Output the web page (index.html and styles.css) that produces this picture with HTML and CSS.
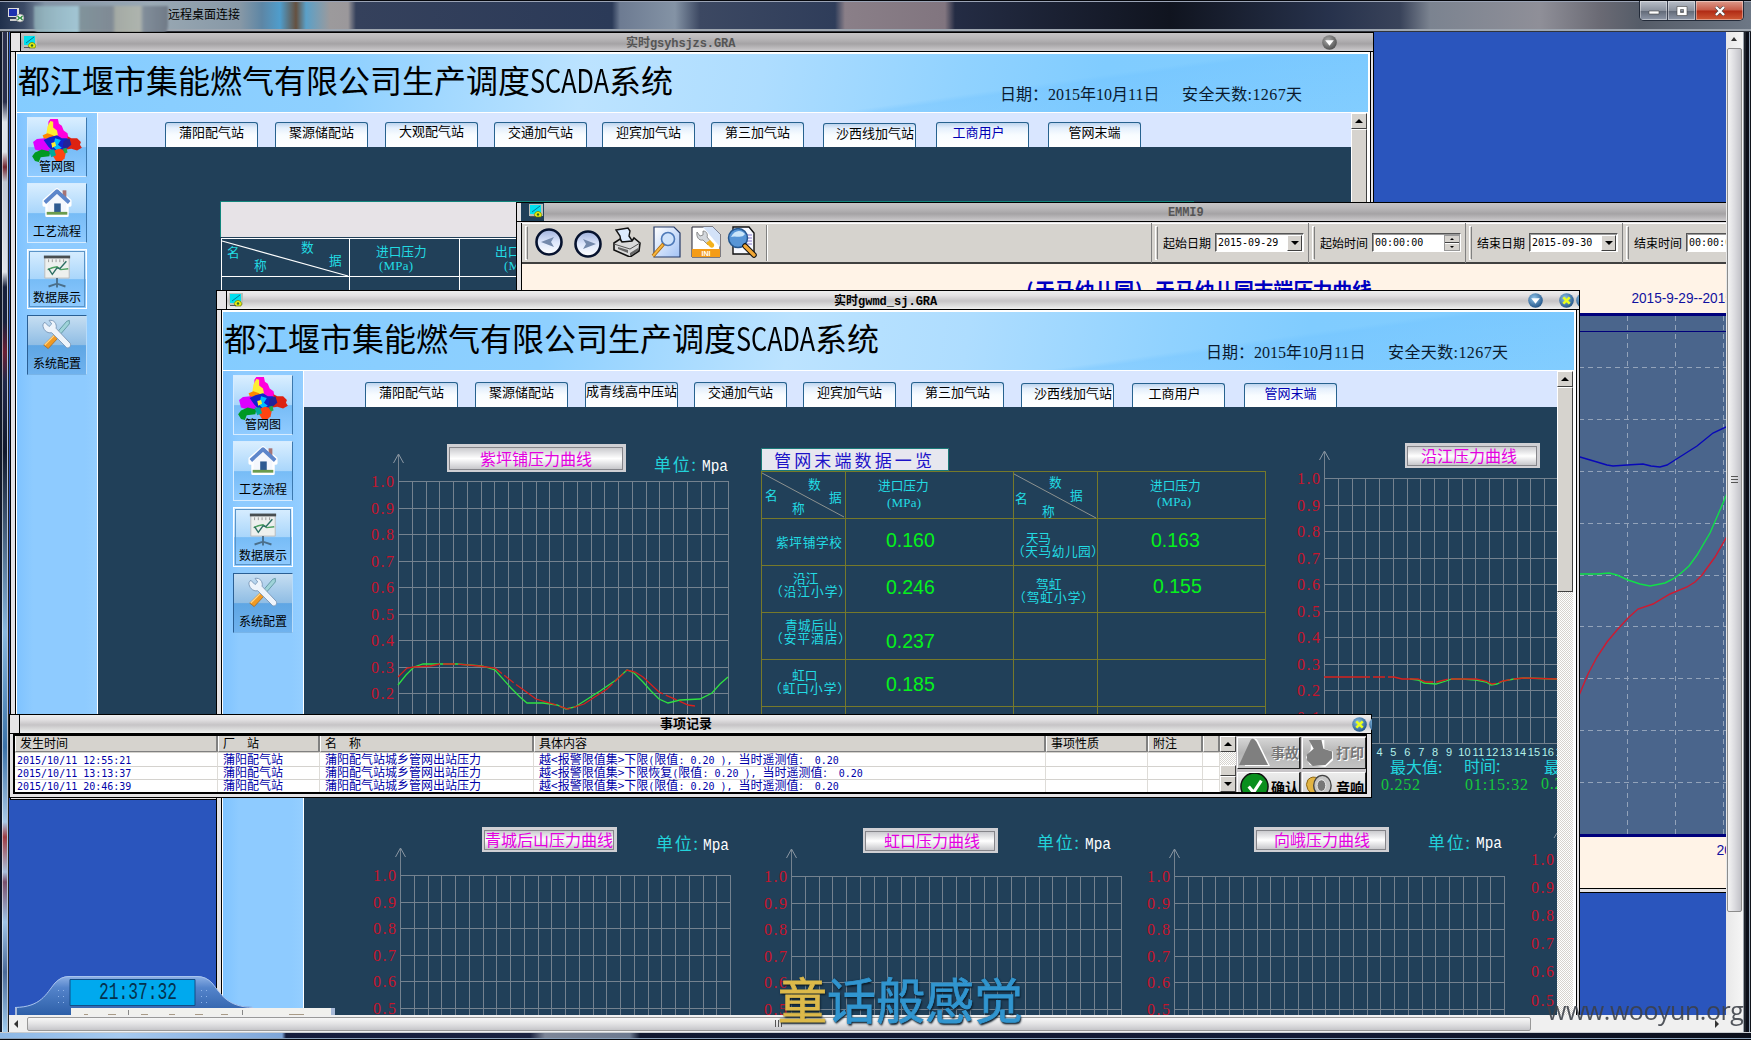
FILE: index.html
```html
<!DOCTYPE html>
<html lang="zh-CN">
<head>
<meta charset="utf-8">
<title>远程桌面连接</title>
<link rel="stylesheet" href="styles.css">
</head>
<body>
<svg class="defs" width="0" height="0" aria-hidden="true">
  <defs>
    <linearGradient id="gBall" x1="0" y1="0" x2="0" y2="1"><stop offset="0" stop-color="#9fb0dc"/><stop offset=".5" stop-color="#dde6fb"/><stop offset="1" stop-color="#fff"/></linearGradient>
    <linearGradient id="gPage" x1="0" y1="0" x2="1" y2="1"><stop offset="0" stop-color="#fff"/><stop offset="1" stop-color="#a3c3f5"/></linearGradient>
    <linearGradient id="gBtn" x1="0" y1="0" x2="0" y2="1"><stop offset="0" stop-color="#c8c8cc"/><stop offset=".5" stop-color="#fff"/><stop offset="1" stop-color="#c4c4c8"/></linearGradient>
    <linearGradient id="gClock" x1="0" y1="0" x2="0" y2="1"><stop offset="0" stop-color="#8fb2e6"/><stop offset=".3" stop-color="#5484cb"/><stop offset="1" stop-color="#2d5fa8"/></linearGradient>
    <radialGradient id="gBlue" cx=".4" cy=".35" r=".7"><stop offset="0" stop-color="#8fc4ea"/><stop offset="1" stop-color="#1d4f83"/></radialGradient>
    <radialGradient id="gGrey" cx=".4" cy=".35" r=".7"><stop offset="0" stop-color="#aaa"/><stop offset="1" stop-color="#4c4c4c"/></radialGradient>
  </defs>
  <symbol id="i-win" viewBox="0 0 14 14"><path d="M0 0h14v12H0z" fill="#b9bfb9"/><path d="M1 1h11v9H1z" fill="#00e0ee"/><path d="M3 8l8-6" stroke="#079" /><path d="M6 13a3.6 3.6 0 1 1 6 0z" fill="#e6ee10" stroke="#5b6a00" stroke-width=".6"/><circle cx="9" cy="10.5" r="1.2" fill="#286a30"/><path d="M1 12.500h6" stroke="#555"/></symbol>
  <symbol id="i-map" viewBox="0 0 52 46">
    <path d="M17 3l2-3 8 0 1 5 3 2 2 5 4 3 1 5-5 2-9-2-5-6-2-4z" fill="#f0d"/><path d="M16 8l3-6 3 1 0 6 4 3 1 5-4 3-9 1 1-6z" fill="#fe3"/>
    <path d="M11 17l5-2 6 2 4 6-8 4-5-4z" fill="#f80"/><path d="M1 24l4-3 8-1 9 3 3 7-5 7-5-1-5-2-7-2z" fill="#d0f"/><path d="M12 22l6-3 8-2 5 3 8 0 3 7-6 3-4 5-6 1-5-3-4-4z" fill="#12c"/>
    <path d="M24 20l6 2-3 5 4 3-5 3-4-4z" fill="#0bf"/><path d="M20 25l4-1 1 4-4 2z" fill="#fe3"/><path d="M37 18l4 2 6 0 4 4-1 3 2 3-5 3-6-2-5 1-3-5 4-3z" fill="#d21"/><path d="M33 23l6-3 2 7-6 5-3-3z" fill="#229"/>
    <path d="M0 39l3-4 7-3 9 2-1 5-9 1-2 5-4-1z" fill="#092"/><path d="M23 33l5-2 4 1 3 4-1 5-4 4-5-1-3-5z" fill="#f41"/><path d="M17 32l6 0 2 6-5 2z" fill="#0a9"/><path d="M32 31l4-1 1 5-3 1z" fill="#2a4"/>
  </symbol>
  <symbol id="i-home" viewBox="0 0 32 32"><path d="M2 14L16 2l14 12v5h-3v11H5V19H2z" fill="#fff" stroke="#fff" stroke-width="3" stroke-linejoin="round"/><path d="M22 3h4v8h-4z" fill="#a77474"/><path d="M6 16l10-9 10 9v11H6z" fill="#f4f7fd"/><path d="M3 16L16 4l13 12" fill="none" stroke="#5d86cb" stroke-width="4" stroke-linejoin="round"/><path d="M13 17h7v10h-7z" fill="#2e5a91"/><path d="M5 26h22v3H5z" fill="#6a9b4e"/></symbol>
  <symbol id="i-board" viewBox="0 0 32 36"><path d="M3 3h26v22H3z" fill="#edf0ee" stroke="#bbb"/><path d="M2 1h28v3H2z" fill="#484e50"/><path d="M7 5v3M11 5v3M15 5v3M19 5v3M23 5v3" stroke="#999"/><path d="M6 16l5-2 5-1 4 3 8-1" fill="none" stroke="#4aa05e" stroke-width="1.500"/><path d="M7 15l4 6 5-7 3 1 7-8" fill="none" stroke="#2d6e63" stroke-width="1.500"/><path d="M16 25v6M7 34l9-3 9 3M16 30v5" fill="none" stroke="#4b6f8a" stroke-width="2"/></symbol>
  <symbol id="i-tools" viewBox="0 0 34 34"><path d="M31 1l-3 1-12 14 3 3L31 5z" fill="#9fd3d8" stroke="#4b8791" stroke-width=".8"/><path d="M16 15l4 4L7 33l-5-4z" fill="#f09a24" stroke="#a85f10" stroke-width=".8"/><path d="M3 29l13-13" stroke="#ffd68a" stroke-width="1.500"/><path d="M3 3l5 5 3-3-3-4c6-1 9 4 8 9l16 17c2 4-3 7-5 4L11 15C5 16 1 11 1 6z" fill="#eef4fb" stroke="#7794b4"/></symbol>
  <symbol id="i-prev" viewBox="0 0 28 28"><circle cx="14" cy="14" r="12.500" fill="url(#gBall)" stroke="#06122e" stroke-width="2.600"/><path d="M6 14l13-5-3 5 3 5z" fill="#7489ac"/></symbol>
  <symbol id="i-next" viewBox="0 0 28 28"><circle cx="14" cy="14" r="12.500" fill="url(#gBall)" stroke="#06122e" stroke-width="2.600"/><path d="M22 14L9 9l3 5-3 5z" fill="#7489ac"/></symbol>
  <symbol id="i-print" viewBox="0 0 28 30"><path d="M3 3l12-2 2 3-1 5 4 6H8L7 9z" fill="#dceafd" stroke="#111" stroke-width="1.400"/><path d="M1 16l6-4 2 3 10-1 2-3 6 5-1 8-9 6-16-7z" fill="#dadada" stroke="#111" stroke-width="1.600"/><path d="M1 17l16 5 10-6" fill="none" stroke="#555"/><path d="M5 22l10 4v-3L5 20zM17 26l8-5v3l-8 5z" fill="#666"/></symbol>
  <symbol id="i-find" viewBox="0 0 30 32"><path d="M3 1h20l6 6v24H3z" fill="url(#gPage)" stroke="#243a68" stroke-width="1.200"/><circle cx="17" cy="13" r="6.500" fill="#cfe3fb" stroke="#4d79b8" stroke-width="1.600"/><path d="M12.500 18L2 30" stroke="#a8660f" stroke-width="3.600"/><path d="M12 18.500L2 30" stroke="#f7b63d" stroke-width="2"/></symbol>
  <symbol id="i-ini" viewBox="0 0 30 32"><path d="M1 1h21l7 7v23H1z" fill="#fff" stroke="#223" /><path d="M22 1l7 7v13L12 1z" fill="#d3e2f8"/><path d="M6 6l3 4 3-1 0-4c4 0 5 4 4 6l4 5-3 3-5-5c-4 1-7-3-6-8z" fill="#d3d7dc" stroke="#777" stroke-width=".8"/><path d="M15 17l4-3 4 4c1 3-2 5-4 3z" fill="#f4b21c"/><path d="M1 23h28v8H1z" fill="#f49c17"/><text x="15" y="27" class="ini">INI</text></symbol>
  <symbol id="i-scan" viewBox="0 0 30 32"><path d="M6 1h16l5 6v21H6z" fill="#f7f9ff" stroke="#111" stroke-width="1.400"/><path d="M19 9h6M19 12h6M19 15h6M19 18h6" stroke="#8877cc"/><circle cx="11" cy="12" r="9.500" fill="#5795d6" stroke="#24568e" stroke-width="1.500"/><path d="M4 11c3-7 10-8 14-3-3 5-10 1-14 3z" fill="#cbe6fa"/><path d="M18 20l9 9" stroke="#111" stroke-width="5.500" stroke-linecap="round"/><path d="M18 20l9 9" stroke="#f2a735" stroke-width="3.400" stroke-linecap="round"/></symbol>
  <symbol id="i-down" viewBox="0 0 14 14"><circle cx="7" cy="7" r="6.800" fill="url(#gBlue)"/><path d="M3 5h8l-4 5z" fill="#fff"/></symbol>
  <symbol id="i-downg" viewBox="0 0 14 14"><circle cx="7" cy="7" r="6.800" fill="url(#gGrey)"/><path d="M3 5h8l-4 5z" fill="#fff"/></symbol>
  <symbol id="i-close" viewBox="0 0 14 14"><circle cx="7" cy="7" r="6.800" fill="url(#gBlue)"/><path d="M4 4l6 6M10 4l-6 6" stroke="#e9ff1c" stroke-width="2.400"/></symbol>
</svg>

<div class="rdp">
  <header class="rdp-title">
    <svg class="rdp-icon" viewBox="0 0 18 16"><path d="M0 1h11v9H0z" fill="#ddd"/><path d="M1 2h8v7H1z" fill="#1b2fb0"/><path d="M2 12h8v2H2z" fill="#ccc"/><circle cx="12" cy="11" r="4" fill="#eee" stroke="#777" stroke-width=".6"/><path d="M9.500 9l2 2-2 2M14.500 9l-2 2 2 2" fill="none" stroke="#1a8a2d" stroke-width="1.200"/></svg>
    <span class="mosaic"></span>
    <span class="rdp-name">远程桌面连接</span>
    <div class="caption">
      <span class="cap"><svg viewBox="0 0 12 10"><path d="M1 5h10v3H1z" fill="#fff" stroke="#444" stroke-width=".6"/></svg></span>
      <span class="cap"><svg viewBox="0 0 12 10"><path d="M1 .5h10v9H1z M4.500 3.500h3v3h-3z" fill="#fff" fill-rule="evenodd" stroke="#444" stroke-width=".6"/></svg></span>
      <span class="cap cap-close"><svg viewBox="0 0 12 10"><path d="M2 1l8 8M10 1L2 9" stroke="#444" stroke-width="3.400"/><path d="M2 1l8 8M10 1L2 9" stroke="#fff" stroke-width="2.400"/></svg></span>
    </div>
  </header>
  <div class="edge edge-left"></div>

  <main class="desktop">
    <section class="win win-users">
      <div class="bar inactive"><i class="cell"></i><svg class="wi"><use href="#i-win"/></svg><b class="wt">实时<tt>gsyhsjzs.GRA</tt></b><svg class="wb wb-a"><use href="#i-downg"/></svg></div>
      <div class="inner">
        <div class="banner"><h1>都江堰市集能燃气有限公司生产调度<span>SCADA</span>系统</h1><p>日期：2015年10月11日</p><p class="days">安全天数:1267天</p></div>
        <div class="app">
          <nav class="side">
            <a class="sb sb-map"><svg><use href="#i-map"/></svg>管网图</a>
            <a class="sb"><svg><use href="#i-home"/></svg>工艺流程</a>
            <a class="sb sb-on"><svg><use href="#i-board"/></svg>数据展示</a>
            <a class="sb sb-dim"><svg><use href="#i-tools"/></svg>系统配置</a>
          </nav>
          <div class="page">
            <div class="tabs tabs-a">
              <a>蒲阳配气站</a><a>聚源储配站</a><a class="up">大观配气站</a><a>交通加气站</a><a>迎宾加气站</a><a>第三加气站</a><a class="low far">沙西线加气站</a><a class="cur near">工商用户</a><a>管网末端</a>
            </div>
            <svg class="canvas" width="1253" height="640" viewBox="98 147 1253 640">
              <path d="M221 201h973v36H221z" fill="#e7e3e7"/>
              <path d="M220.500 237V201.500H1194" class="teal"/>
              <path d="M221 238.500H1194M221 276.500H1194M221.500 238V640M349.500 238V640M459.500 238V640" class="wline"/>
              <path d="M222 241L348 276" class="wdiag"/>
              <g class="c13"><text x="227" y="251" textLength="12">名</text><text x="254" y="264" textLength="12">称</text><text x="301" y="246">数</text><text x="329" y="259">据</text><text x="376" y="250">进口压力</text><text x="379" y="265" class="lat" textLength="34">(MPa)</text><text x="495" y="250">出口压力</text><text x="504" y="265" class="lat" textLength="34">(MPa)</text></g>
            </svg>
          </div>
          <div class="vs"><i class="vs-up"></i><i class="vs-thumb"></i></div>
        </div>
      </div>
    </section>

    <section class="win win-curve">
      <div class="bar inactive"><i class="cell"></i><span class="dark"><svg class="wi"><use href="#i-win"/></svg></span><b class="wt"><tt>EMMI9</tt></b></div>
      <div class="inner">
        <div class="tools">
          <i class="grip"></i>
          <svg class="t1"><use href="#i-prev"/></svg><svg class="t2"><use href="#i-next"/></svg><svg class="t3"><use href="#i-print"/></svg><svg class="t4"><use href="#i-find"/></svg><svg class="t5"><use href="#i-ini"/></svg><svg class="t6"><use href="#i-scan"/></svg>
          <i class="sep"></i>
          <label class="fld"><i class="grip"></i>起始日期<span class="inp"><tt>2015-09-29</tt><i class="dd"></i></span></label>
          <label class="fld"><i class="grip"></i>起始时间<span class="inp"><tt>00:00:00</tt><i class="sp"></i></span></label>
          <label class="fld"><i class="grip"></i>结束日期<span class="inp"><tt>2015-09-30</tt><i class="dd"></i></span></label>
          <label class="fld"><i class="grip"></i>结束时间<span class="inp"><tt>00:00:00</tt><i class="sp"></i></span></label>
        </div>
        <svg class="plot" width="1208" height="625" viewBox="522 264 1208 625">
          <path d="M522 264h1208v625H522z" fill="#fff3e7"/>
          <g class="ptitle"><text x="1026" y="289">(</text><text x="1035" y="289" textLength="99">天马幼儿园</text><text x="1135" y="289">)</text><text x="1155" y="289" textLength="217">天马幼儿园末端压力曲线</text></g>
          <text x="1631.500" y="298" class="pdate" textLength="133" lengthAdjust="spacingAndGlyphs">2015-9-29--2015-9-30</text>
          <path d="M560 313h1170v524H560z" fill="#4a658c"/>
          <path d="M560 313h1170v3H560zM560 331h1170v1H560zM560 834h1170v3H560z" fill="#00007b"/>
          <path class="dash" d="M1627.500 316V834M1675.500 316V834M1723.500 316V834M1579 367.500H1730M1579 419.500H1730M1579 471.500H1730M1579 523.500H1730M1579 575.500H1730M1579 626.500H1730M1579 678.500H1730M1579 730.500H1730M1579 782.500H1730"/>
          <polyline class="ln" stroke="#0808b8" points="1570,454 1580,457 1597,462 1607,465 1613,466 1627,465 1643,464 1651,466 1660,467 1667,465 1675,460 1697,446 1713,433 1726,427 1732,425"/>
          <polyline class="ln" stroke="#10e048" points="1570,574 1598,574 1609,573 1617,575 1628,580 1640,584 1650,586 1665,583 1673,579 1680,574 1689,566 1697,555 1710,533 1720,510 1726,496 1730,486"/>
          <polyline class="ln" stroke="#d01a30" points="1575,706 1580,693 1588,674 1597,657 1607,642 1617,630 1628,618 1638,609 1653,604 1670,594 1687,587 1695,582 1702,575 1715,557 1726,538 1730,531"/>
          <text x="1716.500" y="850" class="pdate">2015</text>
        </svg>
      </div>
    </section>

    <section class="win win-net">
      <div class="bar"><i class="cell"></i><svg class="wi"><use href="#i-win"/></svg><b class="wt">实时<tt>gwmd_sj.GRA</tt></b><svg class="wb wb-a"><use href="#i-down"/></svg><svg class="wb wb-b"><use href="#i-close"/></svg><svg class="wb wb-c"><use href="#i-close"/></svg></div>
      <div class="inner">
        <div class="banner"><h1>都江堰市集能燃气有限公司生产调度<span>SCADA</span>系统</h1><p>日期：2015年10月11日</p><p class="days">安全天数:1267天</p></div>
        <div class="app">
          <nav class="side">
            <a class="sb sb-map"><svg><use href="#i-map"/></svg>管网图</a>
            <a class="sb"><svg><use href="#i-home"/></svg>工艺流程</a>
            <a class="sb sb-on"><svg><use href="#i-board"/></svg>数据展示</a>
            <a class="sb sb-dim"><svg><use href="#i-tools"/></svg>系统配置</a>
          </nav>
          <div class="page">
            <div class="tabs tabs-b">
              <a>蒲阳配气站</a><a>聚源储配站</a><a class="up">成青线高中压站</a><a>交通加气站</a><a>迎宾加气站</a><a>第三加气站</a><a class="low far">沙西线加气站</a><a class="low near">工商用户</a><a class="low cur">管网末端</a>
            </div>
            <svg class="canvas" width="1253" height="608" viewBox="304 407 1253 608">
              <g id="charts"></g>
              <g class="olive"><path d="M761.500 471V720M845.500 471V720M1013.500 471V720M1097.500 471V720M1265.500 471V720M761 471.500H1266M761 518.500H1266M761 565.500H1266M761 612.500H1266M761 659.500H1266M761 706.500H1266"/></g>
              <path d="M762 473L844 517M1014 474L1096 518" class="gdiag"/>
              <path d="M761.500 448.500h187v22h-187z" fill="#e7e7ef" stroke="#1a7a78"/>
              <text x="774" y="459" class="kai" textLength="158">管网末端数据一览</text>
              <g class="c13">
                <text x="808" y="483">数</text><text x="829" y="496">据</text><text x="765" y="494">名</text><text x="792" y="507">称</text>
                <text x="878" y="484">进口压力</text><text x="887" y="502" class="lat" textLength="34">(MPa)</text>
                <text x="1049" y="481">数</text><text x="1070" y="494">据</text><text x="1015" y="497">名</text><text x="1042" y="510">称</text>
                <text x="1150" y="484">进口压力</text><text x="1157" y="501" class="lat" textLength="34">(MPa)</text>
                <text x="776" y="541" textLength="66">紫坪铺学校</text><text x="1026" y="537" textLength="25">天马</text><text x="1012" y="550" textLength="92">（天马幼儿园）</text>
                <text x="793" y="577">沿江</text><text x="770" y="590" textLength="81">（沿江小学）</text><text x="1036" y="583">驾虹</text><text x="1013" y="596" textLength="81">（驾虹小学）</text>
                <text x="785" y="624" textLength="52">青城后山</text><text x="770" y="637" textLength="81">（安平酒店）</text><text x="792" y="674">虹口</text><text x="769" y="687" textLength="81">（虹口小学）</text>
              </g>
              <g class="val"><text x="886" y="540">0.160</text><text x="886" y="587">0.246</text><text x="886" y="641">0.237</text><text x="886" y="684">0.185</text><text x="1151" y="540">0.163</text><text x="1153" y="586">0.155</text></g>
              <g class="hours" id="hours"></g>
              <g class="c16"><text x="1390" y="766">最大值:</text><text x="1464" y="765">时间:</text><text x="1544" y="766">最小值:</text></g>
              <g class="g16"><text x="1381" y="784" textLength="39">0.252</text><text x="1465" y="784" textLength="63">01:15:32</text><text x="1541" y="783" textLength="39">0.238</text></g>
            </svg>
          </div>
          <div class="vs"><i class="vs-up"></i><i class="vs-thumb vs-part"></i></div>
        </div>
      </div>
    </section>

    <section class="dock">
      <svg width="330" height="39" viewBox="0 0 330 39">
        <path d="M0 31C26 31 31 18 40 7Q46 0 54 0H182Q191 0 197 7C206 18 212 31 238 31V39H0z" fill="url(#gClock)"/>
        <path d="M0 31.500C26 31 31 18 40 7Q46 .5 54 .5H182Q191 .5 197 7C206 18 212 31 238 31.500" fill="none" stroke="#a9c4ee"/>
        <g fill="#8fb4ea"><path d="M43 14h1v1h-1zM48 14h1v1h-1zM43 20h1v1h-1zM48 20h1v1h-1zM43 26h1v1h-1zM48 26h1v1h-1zM186 14h1v1h-1zM191 14h1v1h-1zM186 20h1v1h-1zM191 20h1v1h-1zM186 26h1v1h-1zM191 26h1v1h-1z"/></g>
        <path d="M55 3.500h125v26H55z" fill="#00a9ee" stroke="#134d86"/>
        <text x="84" y="17" class="lcd" textLength="78" lengthAdjust="spacingAndGlyphs">21:37:32</text>
        <path d="M56 32h264v7H56z" fill="#f1f1ee"/><path d="M0 32v8M318 32v8" stroke="#a8bad8" stroke-width="4"/><path d="M113.500 34v5M227.500 34v5" stroke="#888"/>
        <path d="M69 38.500h4M93 38.500h8M126 38.500h7M154 38.500h6M180 38.500h8M206 38.500h7M274 38.500h15" stroke="#a89a86"/>
      </svg>
    </section>

    <section class="win win-log">
      <div class="bar"><i class="cell"></i><b class="wt">事项记录</b><svg class="wb wb-b"><use href="#i-close"/></svg><svg class="wb wb-c"><use href="#i-close"/></svg></div>
      <div class="log">
        <table>
          <thead><tr><th>发生时间</th><th>厂　站</th><th>名　称</th><th>具体内容</th><th>事项性质</th><th>附注</th><th></th></tr></thead>
          <tbody>
            <tr><td><tt>2015/10/11 12:55:21</tt></td><td>蒲阳配气站</td><td>蒲阳配气站城乡管网出站压力</td><td>越&lt;报警限值集&gt;下限<tt>(</tt>限值<tt>: 0.20 ), </tt>当时遥测值<tt>： 0.20</tt></td><td></td><td></td><td></td></tr>
            <tr><td><tt>2015/10/11 13:13:37</tt></td><td>蒲阳配气站</td><td>蒲阳配气站城乡管网出站压力</td><td>越&lt;报警限值集&gt;下限恢复<tt>(</tt>限值<tt>: 0.20 ), </tt>当时遥测值<tt>： 0.20</tt></td><td></td><td></td><td></td></tr>
            <tr><td><tt>2015/10/11 20:46:39</tt></td><td>蒲阳配气站</td><td>蒲阳配气站城乡管网出站压力</td><td>越&lt;报警限值集&gt;下限<tt>(</tt>限值<tt>: 0.20 ), </tt>当时遥测值<tt>： 0.20</tt></td><td></td><td></td><td></td></tr>
          </tbody>
        </table>
        <div class="vs log-vs"><i class="vs-up"></i><i class="mid"></i><i class="vs-low"></i><i class="vs-down"></i></div>
        <div class="acts">
          <span class="act off"><svg viewBox="0 0 34 32"><path d="M15 2q4-2 6 3l12 25H7z" fill="#fff"/><path d="M13 3q3-3 6 2l12 24H1z" fill="#7f7f7f"/></svg>事故</span>
          <span class="act off"><svg viewBox="0 0 34 32"><path d="M8 3h14v9l9 3v9l-8 7-16-2-4-8 5-8z" fill="#fff"/><path d="M6 3h13l2 9 9 3v7l-7 7-13 1-6-6 0-6 7-6z" fill="#7f7f7f"/></svg>打印</span>
          <span class="act"><svg viewBox="0 0 34 32"><circle cx="17" cy="15" r="14" fill="#0a8f1e" stroke="#111" stroke-width="1.500"/><path d="M11 15l5 6 8-12" fill="none" stroke="#fff" stroke-width="3.200"/></svg>确认</span>
          <span class="act"><svg viewBox="0 0 34 32"><path d="M5 8q5-5 11-1v14q-7 4-11-3-3-5 0-10z" fill="#e2b443" stroke="#8a6411"/><ellipse cx="20" cy="14" rx="9" ry="10.500" fill="#c6c6c6" stroke="#444" stroke-width="1.400"/><ellipse cx="19" cy="14" rx="4.500" ry="6" fill="#777" stroke="#eee"/></svg>音响</span>
        </div>
      </div>
    </section>
  </main>

  <div class="vbar"><i class="ar-up"></i><i class="vthumb"><i></i></i></div>
  <div class="edge edge-right"></div>
  <div class="hbar"><i class="ar-left"></i><i class="hthumb"><i></i></i><i class="ar-right"></i></div>
  <div class="edge edge-bottom"></div>
  <div class="mark"><em>童</em>话般感觉</div>
  <div class="site">www.wooyun.org</div>
</div>
<script src="charts.js"></script>
</body>
</html>
```
FILE: charts.js
```js
const NS = 'http://www.w3.org/2000/svg';
const STEP_X = 13.76, STEP_Y = 26.5;

function add(parent, name, attrs, text) {
  const el = document.createElementNS(NS, name);
  for (const k in attrs) el.setAttribute(k, attrs[k]);
  if (text !== undefined) el.textContent = text;
  parent.appendChild(el);
  return el;
}

const charts = [
  { x: 398, y: 481, rows: 10, title: '紫坪铺压力曲线', btn: [447, 444, 179, 28], tx: 480, unit: [654, 463, 702, 467],
    green: '398,685 406,675 414,667 423,664 457,664 482,666 495,670 511,688 520,697 527,703 543,703 557,705 566,709 575,707 600,691 616,680 627,670 634,673 643,682 651,691 659,699 668,703 680,700 700,699 712,693 720,684 728,677',
    red: '398,677 407,668 414,667 430,666 440,664 457,664 479,666 495,668 514,683 536,699 550,703 568,709 584,704 607,689 627,670 635,672 643,677 659,692 679,701 688,705 695,706' },
  { x: 1324, y: 478, rows: 10, title: '沿江压力曲线', btn: [1405, 443, 135, 25], tx: 1421,
    green: '1410,679 1418,680 1424,683 1436,684 1446,681 1452,679 1462,679 1476,680 1486,682 1491,685 1497,684 1503,681 1514,679 1524,678 1557,679',
    red: '1324,677 1394,677 1402,679 1418,679 1426,682 1437,682 1448,679 1462,679 1476,679 1486,681 1492,684 1498,683 1503,681 1514,679 1524,678 1557,679' },
  { x: 400, y: 875, rows: 5, title: '青城后山压力曲线', btn: [482, 827, 135, 25], tx: 485, unit: [656, 842, 703, 846] },
  { x: 791, y: 876, rows: 5, title: '虹口压力曲线', btn: [863, 828, 135, 25], tx: 884, unit: [1037, 841, 1085, 845] },
  { x: 1174, y: 876, rows: 5, title: '向峨压力曲线', btn: [1254, 827, 135, 25], tx: 1274, unit: [1428, 841, 1476, 844] }
];

const root = document.getElementById('charts');

for (const c of charts) {
  const bottom = c.rows === 10 ? c.y + 265 : 1015;
  let d = `M${c.x + .5} ${c.y - 26}V${bottom}`;
  for (let i = 1; i <= 24; i++) {
    d += `M${Math.round(c.x + i * STEP_X) + .5} ${c.y}V${bottom}`;
  }
  for (let i = 0; i <= c.rows; i++) {
    const y = Math.round(c.y + i * STEP_Y) + .5;
    d += `M${c.x} ${y}H${c.x + 331}`;
    if (i < 10) add(root, 'text', { x: c.x - 27, y: y, class: 'tick', textLength: 23 }, (1 - i / 10).toFixed(1));
  }
  add(root, 'path', { d, class: 'grid' });
  add(root, 'path', { d: `M${c.x - 4.5} ${c.y - 18}L${c.x + .5} ${c.y - 27}L${c.x + 5.5} ${c.y - 18}`, class: 'arrow' });
  if (c.green) add(root, 'polyline', { points: c.green, class: 'trend', stroke: '#2fe040' });
  if (c.red) add(root, 'polyline', { points: c.red, class: 'trend', stroke: '#d8201c', 'stroke-dasharray': '46 3 12 3' });
  const [bx, by, bw, bh] = c.btn;
  add(root, 'rect', { x: bx, y: by, width: bw, height: bh, fill: '#d0d0d4' });
  add(root, 'rect', { x: bx + 2.5, y: by + 3.5, width: bw - 6, height: bh - 6, fill: 'url(#gBtn)', stroke: '#85858a' });
  add(root, 'text', { x: c.tx, y: by + bh / 2 - .5, class: 'ctitle' }, c.title);
  if (c.unit) {
    add(root, 'text', { x: c.unit[0], y: c.unit[1], class: 'unit', textLength: 42 }, '单位:');
    add(root, 'text', { x: c.unit[2], y: c.unit[3], class: 'mpa', textLength: 26, lengthAdjust: 'spacingAndGlyphs' }, 'Mpa');
  }
}

['1.0', '0.9', '0.8', '0.7', '0.6', '0.5'].forEach((t, i) => {
  add(root, 'text', { x: 1531, y: 859 + i * 28.2, class: 'tick', textLength: 23 }, t);
});
add(root, 'path', { d: 'M1554 838l3-5', class: 'arrow' });

const hours = document.getElementById('hours');
for (let h = 4; h <= 17; h++) add(hours, 'text', { x: 1379.5 + (h - 4) * 13.9 + (h > 9 ? 1.5 : 0), y: 752 }, h);
```
FILE: styles.css
```css
* { box-sizing: border-box; }
body { margin: 0; width: 1751px; height: 1040px; overflow: hidden; font: 12px/1 "Noto Sans CJK SC", sans-serif; color: #000; }
.defs { position: absolute; }
i, em { font-style: normal; display: block; }
tt { font-family: "DejaVu Sans Mono", "Noto Sans CJK SC", monospace; font-size: 10px; }
svg { flex: none; }

/* remote desktop frame */
.rdp { position: relative; display: grid; width: 1751px; height: 1040px; grid-template: 32px 983px 17px 8px / 9px 1717px 17px 8px; background: #1b2233; overflow: hidden; }
.rdp-title { grid-column: 1 / -1; display: flex; align-items: flex-start; padding-left: 8px; border-top: 1px solid #05070c; box-shadow: inset 0 1px #9aa3b5, inset 0 -1px #30343c, inset 0 -3px #9ea6b0;
  background: linear-gradient(90deg, #20304c 0, #3c4b66 24px, #8294a6 45px, #9aa9b4 150px, #8798a6 240px, #5d86a5 262px, #4f9dcc 280px, #65503f 296px, #5aa0c8 306px, #9c9a9c 330px, #9b989b 348px, #35415c 356px, #2b3a58 612px, #6d7b92 620px, #8493a5 675px, #3c4862 700px, #2f3d5a 835px, #8a7f88 845px, #81757f 945px, #242c44 955px, #10141f 1170px, #27324c 1330px, #39435a 1400px, #7b8390 1430px, #8f8f98 1540px, #6a6a74 1600px, #555c68 1640px, #6d7785 1751px); }
.rdp-icon { width: 18px; height: 16px; margin-top: 6px; }
.mosaic { width: 134px; height: 30px; margin: 5px 0 0 8px; opacity: .8; border-radius: 0 0 10px 10px; background: linear-gradient(90deg, #8fb0b8 0, #9ec4d0 24px, #a8d0de 44px, #7f9298 46px, #7c858f 78px, #a9ada3 82px, #b4b8ad 106px, #7b8794 110px, #68717e 134px); filter: blur(1px); }
.rdp-name { margin-top: 7px; }
.caption { display: flex; height: 20px; margin: 0 7px 0 auto; border: 1px solid #222a38; border-top: 0; border-radius: 0 0 5px 5px; overflow: hidden; }
.cap { display: grid; place-items: center; width: 28px; border-right: 1px solid #3a4150; background: linear-gradient(#b9bfc8, #8b929e 50%, #616977 52%, #8f98a8); box-shadow: inset 0 0 0 1px #ffffff66; }
.cap svg { width: 12px; height: 10px; }
.cap-close { width: 47px; border: 0; background: linear-gradient(#dd9b8c, #c75b47 48%, #b02a14 52%, #cf5a35); }
.edge-left { grid-row: 2 / 4; background: linear-gradient(90deg, #101828 0 2px, #ffffff88 2px 3px, transparent 3px 7px, #b8c4d4 7px 8px, #222 8px), linear-gradient(#2a2f4c 0, #2a2f4c 70px, #dde3ea 90px, #dde3ea 120px, #702530 135px, #c0c8d4 150px, #e0e4ea 240px, #17203c 255px, #17203c 290px, #6a1f34 320px, #20284a 350px, #10182c 420px, #88b8e0 600px, #3b72a8 715px, #a9c8e6 790px, #9c3c44 805px, #a9bfdb 840px, #78506c 850px, #9fc4e8 890px, #4a6a98 940px, #a0ccf0 1000px); }
.edge-right { grid-column: 4; grid-row: 2 / 4; background: linear-gradient(90deg, #9aa2ac 0 1px, #20242c 1px 3px, #0b0e18 3px 6px, #8fa0b4 6px 7px, #10141c 7px), #0a0d16; }
.edge-bottom { grid-column: 1 / -1; grid-row: 4; background: linear-gradient(#c8ccd0 0 1px, transparent 1px 6px, #8aa0b8 6px 7px, #05070c 7px), linear-gradient(90deg, #8db8e6 0, #a6caf0 120px, #7fa6d8 282px, #141c3c 286px, #1a2240 530px, #7d8698 545px, #6d7a90 630px, #101830 640px, #131b36 1300px, #0a0e1a 1751px); }

.vbar { grid-column: 3; grid-row: 2; background: linear-gradient(90deg, #e8e8e8, #f6f6f6); }
.ar-up { height: 16px; padding: 5px 0 0 5px; }
.ar-up::before { content: ""; display: block; width: 0; border: 3.5px solid transparent; border-top: 0; border-bottom: 4px solid #333; }
.vthumb { display: grid; place-items: center; height: 864px; margin: 0 1px; border: 1px solid #8c8c8c; border-radius: 2px; background: linear-gradient(90deg, #f4f4f4, #dcdce0 50%, #c2c2c8); }
.vthumb i { width: 7px; height: 8px; background: repeating-linear-gradient(#555 0 1px, transparent 1px 3px); }
.hbar { grid-column: 2 / 4; grid-row: 3; display: flex; align-items: center; gap: 6px; padding-left: 5px; background: #f0f0f0; }
.ar-left { border: 4px solid transparent; border-left: 0; border-right: 4px solid #333; margin-right: 3px; }
.ar-right { border: 4px solid transparent; border-right: 0; border-left: 4px solid #333; margin-left: 178px; }
.hthumb { display: grid; place-items: center; width: 1504px; height: 14px; border: 1px solid #999; border-radius: 2px; background: linear-gradient(#f7f7f7, #e2e2e4 50%, #c6c6ca); }
.hthumb i { width: 8px; height: 7px; background: repeating-linear-gradient(90deg, #555 0 1px, transparent 1px 3px); }

.mark { position: absolute; left: 778px; top: 968px; font-size: 49px; line-height: 60px; color: #3195cf; text-shadow: 1px 2px 2px #0b1b28, 0 0 2px #0b2438; -webkit-text-stroke: .8px currentColor; white-space: nowrap; }
.mark em { display: inline; color: #dcb94a; }
.site { position: absolute; left: 1547px; top: 990px; font: 25px/40px "Open Sans", sans-serif; letter-spacing: -.45px; color: #3c4048; opacity: .88; white-space: nowrap; }

/* windows */
.desktop { grid-column: 2; grid-row: 2; position: relative; overflow: hidden; background: #2a55bd; }
.win { position: absolute; border: 1px solid #000; background: #e4e2e4; display: flex; flex-direction: column; }
.win-users { left: 1px; top: 0; width: 1364px; height: 768px; }
.win-curve { left: 507px; top: 170px; width: 1240px; height: 691px; }
.win-net { left: 207px; top: 258px; width: 1364px; height: 800px; }
.win-log { left: 0; top: 682px; width: 1363px; height: 84px; }
.bar { position: relative; display: flex; align-items: center; flex: none; height: 19px; border-bottom: 1px solid #000; background: linear-gradient(#efefef, #e3e1e3 25%, #c6c4c6 55%, #dcdcdc 80%, #f0f0f0); }
.bar.inactive { background: linear-gradient(#c6c4c6, #b9b7b9 30%, #a5a3a5 60%, #bdbbbd 85%, #cfcdcf); color: #555; }
.cell { width: 10px; height: 18px; border-right: 1px solid #000; background: #e6e4e6; }
.wi { width: 14px; height: 14px; margin: -1px 0 0 2px; }
.dark { width: 23px; height: 18px; padding: 2px 0 0 6px; background: #214059; }
.win-curve .cell { width: 4px; border: 0; }
.wt { position: absolute; inset: 1.5px 0 auto; line-height: 13px; }
.wt tt { font: bold 12px "Liberation Mono", monospace; letter-spacing: -.1px; }
.win-users .wt { left: 615px; }
.win-curve .wt { left: 651px; top: .5px; }
.win-net .wt { left: 617px; }
.win-net .wt tt { letter-spacing: 0; }
.win-log .wt { left: 650px; top: 1px; font-size: 13px; }
.wb { position: absolute; top: 2px; width: 15px; height: 15px; }
.wb-a { left: 1311px; }
.wb-b { left: 1342px; }
.wb-c { left: 1359px; width: 15px; clip-path: inset(0 12px 0 0); }
.win-users .inner, .win-net .inner { flex: 1; margin: 0 2px 3px 4px; border: 1px solid #000; border-top: 0; background: #fff; padding: 2px 2px 0 1px; display: flex; flex-direction: column; min-height: 0; }
.banner { display: grid; grid-template-columns: 983px 182px 1fr; height: 58px; flex: none; background: linear-gradient(172deg, transparent 70%, #6cc0ff55 72%, transparent 100%), linear-gradient(100deg, #84ccff 0, #8ed0ff 24%, #bce3ff 42%, #aeddff 55%, #90d2ff 70%, #80ccff 80%, #82cdff 100%); margin-bottom: 1px; }
.banner h1 { margin: 6px 0 0 1px; font-size: 32px; line-height: 38px; font-weight: 400; white-space: nowrap; }
.banner h1 span { display: inline-block; width: 79px; transform: scaleX(.79); transform-origin: 0 0; }
.banner p { margin: 32px 0 0; font: 16px/18px "Liberation Serif", "Noto Sans CJK SC", serif; color: #0a1a2e; white-space: nowrap; }
.banner .days { letter-spacing: .4px; }
.app { display: grid; grid-template-columns: 80px 1px 1253px 16px; flex: 1; min-height: 0; overflow: hidden; }
.side { display: flex; flex-direction: column; gap: 6px; padding: 4px 0 0 10px; background: linear-gradient(90deg, #7fc3ff, #8ecbff 20%, #8ecbff 85%, #94ceff); }
.sb { display: flex; flex-direction: column; align-items: center; justify-content: flex-end; width: 60px; height: 60px; padding-bottom: 5px; border: 1px solid #d7ecff; border-right-color: #3c78ae; background: linear-gradient(#d9eeff, #a9d6fb 50%, #77bcf6 51%, #90cbff); line-height: 13px; }
.sb svg { width: 30px; height: 31px; margin-bottom: 6px; }
.sb-map svg { width: 52px; height: 44px; margin-bottom: -4px; }
.sb-map { padding-bottom: 4px; }
.sb-on { border: 1px solid #fff; outline: 1px solid #5a94c8; outline-offset: -3px; }
.sb-on svg { height: 35px; margin-bottom: 1px; }
.sb-dim { border-color: #2a5f94 #b8dcfa #78b4e8 #2a5f94; background: linear-gradient(#c6def2, #8fbde4 50%, #5fa6e4 51%, #6fb2ee); }
.page { grid-column: 3; display: flex; flex-direction: column; }
.tabs { display: flex; align-items: flex-end; flex: none; height: 34px; padding-left: 67px; background: #d9e6ff; }
.tabs-b { height: 36px; padding-left: 61px; }
.tabs a { flex: none; width: 93px; height: 25px; margin-right: 17px; border: 1px solid #27628f; border-width: 1px 1px 0 1px; border-radius: 3px 3px 0 0; background: linear-gradient(#bdd4ee, #e4effc 20%, #f8fcff 50%, #fff); font-size: 13px; line-height: 18px; text-align: center; white-space: nowrap; }
.tabs .cur { color: #0000b4; }
.tabs .up { line-height: 16px; }
.tabs .low { height: 24px; }
.tabs .far { padding-left: 11px; margin-right: 20px; }
.tabs .near { padding-right: 8px; margin-right: 19px; }
.tabs-a a:nth-child(3), .tabs-a a:nth-child(5) { margin-right: 16px; }
.tabs-a a:nth-child(4) { margin-right: 15px; }
.tabs-a a:nth-child(6) { margin-right: 19px; }
.tabs-b a:nth-child(3), .tabs-b a:nth-child(4) { margin-right: 16px; }
.tabs-b a:nth-child(5) { margin-right: 15px; }
.tabs-b a:nth-child(7) { margin-right: 18px; }
.canvas { display: block; background: #214059; }

/* classic scroll bar */
.vs { display: flex; flex-direction: column; background: repeating-conic-gradient(#fff 0 25%, #d6d3ce 0 50%) 0 0 / 2px 2px; }
.vs i { border: 1px solid; border-color: #fff #404040 #404040 #fff; background: #d6d3ce; }
.vs-up, .vs-down { height: 16px; display: grid; place-items: center; }
.vs-up::before, .vs-down::before { content: ""; border: 4px solid transparent; border-top: 0; border-bottom: 4px solid #000; }
.vs-down::before { border-top: 4px solid #000; border-bottom: 0; }
.vs-thumb { flex: 1; }
.vs-part { flex: none; height: 205px; }

/* curve window */
.win-curve .inner { flex: 1; min-height: 0; overflow: hidden; margin: 1px 0 3px 4px; border: 1px solid #000; border-width: 0 0 1px 1px; }
.tools { display: flex; align-items: center; height: 41px; background: #d6d3ce; border-bottom: 2px solid #404040; border-top: 1px solid #fff; }
.grip { width: 3px; height: 34px; border: 1px solid #fff; border-right-color: #808080; flex: none; }
.tools svg { margin: 0 0 2px; height: 30px; width: 28px; }
.tools .grip:first-child { margin-left: 3px; }
.tools .t1 { margin-left: 7px; height: 28px; } .tools .t2 { margin: 2px 0 0 11px; height: 28px; } .tools .t3 { margin-left: 11px; } .tools .t4, .tools .t5, .tools .t6 { width: 30px; height: 32px; margin-left: 10px; } .tools .t6 { margin-left: 6px; }
.ini { font: bold 7px "Liberation Sans", sans-serif; fill: #fff; text-anchor: middle; }
.sep { width: 2px; height: 36px; margin: 0 383px 0 9px; border-left: 1px solid #808080; border-right: 1px solid #fff; flex: none; }
.fld { display: flex; align-items: center; width: 157px; height: 40px; border-left: 1px solid #808080; padding: 0 0 1px 2px; flex: none; }
.fld .grip { margin: 0 5px 0 1px !important; }
.inp { display: flex; align-items: center; width: 89px; height: 19px; margin-left: 4px; padding-left: 2px; border: 1px solid; border-color: #555 #fff #fff #555; box-shadow: inset 1px 1px #999; background: #fff; }
.dd { width: 15px; height: 16px; margin: 0 1px 0 auto; display: grid; place-items: center; background: #d6d3ce; border: 1px solid; border-color: #fff #404040 #404040 #fff; }
.dd::before { content: ""; border: 4px solid transparent; border-top-color: #000; border-bottom: 0; }
.sp { width: 16px; height: 16px; margin: 0 0 0 auto; border: 1px solid #999; background: linear-gradient(#d6d3ce 0 6px, #404040 6px 7px, #fff 7px 8px, #d6d3ce 8px); display: flex; flex-direction: column; align-items: center; justify-content: space-between; padding: 2px 0; }
.sp::before, .sp::after { content: ""; border: 2px solid transparent; border-bottom-color: #000; border-top: 0; }
.sp::after { border-top: 2px solid #000; border-bottom: 0; }
.plot { display: block; }

/* drawing */
svg text { dominant-baseline: central; white-space: pre; }
.teal { fill: none; stroke: #12857c; }
.wline { stroke: #fff; fill: none; }
.wdiag { stroke: #fff; stroke-width: 1.2; }
.gdiag { stroke: #8d9290; }
.olive path { stroke: #76792a; fill: none; }
.c13 text { font-size: 12.7px; fill: #22dce4; }
.c13 .lat { font: 13px "Liberation Serif", serif; }
.c16 text { font-size: 16px; fill: #22d6de; }
.g16 text { font: 16px "Liberation Serif", serif; fill: #16c83c; }
.hours text { font: 11px "Liberation Sans", sans-serif; fill: #b4f0ea; text-anchor: middle; }
.val text { font: 19.500px "Liberation Sans", sans-serif; fill: #06f21c; }
.kai { font-size: 17px; fill: #1c12c8; }
.tick { font: 16px "Liberation Serif", serif; fill: #c8142c; }
.grid { fill: none; stroke: #74828f; shape-rendering: crispEdges; }
.arrow { fill: none; stroke: #8c98a4; stroke-width: 1; }
.trend { fill: none; stroke-width: 1.3; }
.ctitle { font-size: 16px; fill: #e400e0; }
.unit { font-size: 17px; fill: #22d2da; }
.mpa { font: 16px "Liberation Mono", monospace; fill: #fff; }
.ptitle text { font-size: 20px; font-weight: 700; fill: #0000c0; }
.pdate { font: 14px "Liberation Sans", sans-serif; fill: #1010a0; }
.dash { fill: none; stroke: #93a3ba; stroke-dasharray: 5 4; }
.ln { fill: none; stroke-width: 1.4; }
.lcd { font: 23px "Liberation Mono", monospace; fill: #04324e; }

.dock { position: absolute; left: 6px; top: 944px; }
.dock svg { display: block; }

/* event log */
.log { display: flex; height: 60px; margin: 0 4px 0 3px; border: 2px solid #000; border-right-width: 1px; background: #c9c6c9; overflow: hidden; }
.log table { width: 1205px; height: 56px; table-layout: fixed; border-collapse: separate; border-spacing: 0; background: #fff; flex: none; align-self: flex-start; }
.log th { height: 16px; padding: 0 0 1px 4px; font-weight: 400; text-align: left; background: #d6d3ce; border-right: 2px solid #808080; border-bottom: 1px solid #808080; border-left: 1px solid #fff; line-height: 12px; }
.log th:nth-child(1) { width: 203px; } .log th:nth-child(2) { width: 102px; } .log th:nth-child(3) { width: 214px; } .log th:nth-child(4) { width: 512px; } .log th:nth-child(5) { width: 102px; } .log th:nth-child(6) { width: 55px; }
.log td { height: 13px; padding: 0 0 2px 5px; line-height: 10px; color: #0000a8; white-space: pre; border-right: 1px solid #dedcd8; border-top: 1px solid #d4d2ce; }
.log td tt { line-height: 0; }
.log tbody tr:first-child td { height: 14px; }
.log td:first-child { padding-left: 2px; }
.log-vs { width: 16px; flex: none; }
.log-vs .mid { flex: 1; border: 0; background: none; }
.log-vs .vs-low { height: 11px; }
.acts { display: grid; grid-template-columns: 63px 64px; grid-template-rows: 32px 32px; gap: 3px 2px; padding: 1px 0 0 1px; }
.act { display: flex; align-items: center; border: 1px solid; border-color: #fff #222 #222 #fff; box-shadow: 1px 0 #555; background: linear-gradient(#ececec, #cbcbcb); font: 700 14px/24px "Noto Sans CJK SC", sans-serif; white-space: nowrap; overflow: hidden; padding-bottom: 2px; }
.act svg { width: 33px; height: 31px; }
.act.off { color: #777; text-shadow: 1px 1px #fff; background: linear-gradient(#d6d6d6, #b4b4b4 50%, #c4c4c4); }
```
